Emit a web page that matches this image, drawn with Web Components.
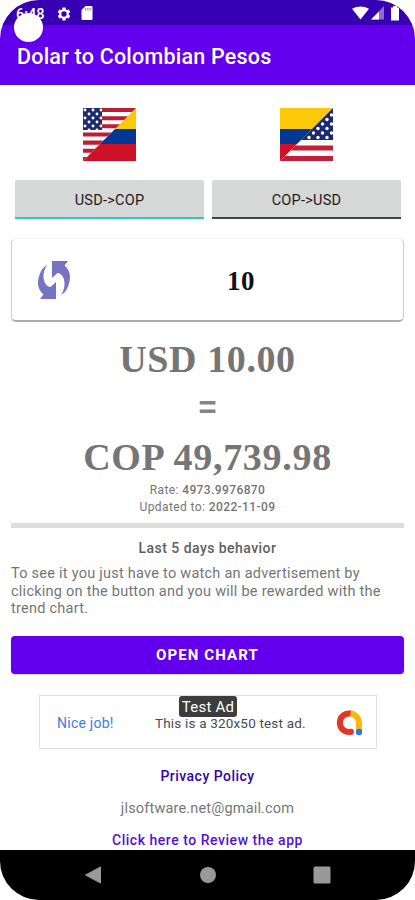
<!DOCTYPE html>
<html lang="en">
<head>
    <meta charset="utf-8">
    <title>Dolar to Colombian Pesos</title>
    <meta name="viewport" content="width=device-width, initial-scale=1">
    <style>
        body {
            margin: 0;
            background: #fff;
            font-family: Roboto, "Liberation Sans", sans-serif;
            color: #757575;
        }
    </style>
</head>

<body>
    <template id="phone-frame">
        <style>
            :host {
                display: flex;
                flex-direction: column;
                position: relative;
                width: 415px;
                height: 900px;
                overflow: hidden;
                border-radius: 39px;
                background: #fff;
            }
            .camera {
                position: absolute;
                left: 14px;
                top: 13px;
                width: 29px;
                height: 29px;
                border-radius: 50%;
                background: #fff;
            }
        </style>
        <slot></slot>
        <div class="camera"></div>
    </template>

    <template id="status-bar">
        <style>
            :host {
                display: flex;
                justify-content: space-between;
                height: 25px;
                box-sizing: border-box;
                padding: 6px 14px 0 16px;
                background: #3700b3;
                color: #fff;
                font-size: 14.5px;
                font-weight: 500;
                line-height: 17px;
            }
            div { display: flex; }
            .time { width: 40px; }
            svg { display: block; fill: #fff; }
        </style>
        <div>
            <span class="time"><slot></slot></span>
            <svg width="16" height="16" viewBox="0 0 24 24"><path d="M19.14 12.94c.04-.3.06-.61.06-.94 0-.32-.02-.64-.07-.94l2.03-1.58c.18-.14.23-.41.12-.61l-1.92-3.32c-.12-.22-.37-.29-.59-.22l-2.39.96c-.5-.38-1.03-.7-1.62-.94l-.36-2.54c-.04-.24-.24-.41-.48-.41h-3.84c-.24 0-.43.17-.47.41l-.36 2.54c-.59.24-1.13.57-1.62.94l-2.39-.96c-.22-.08-.47 0-.59.22L2.74 8.87c-.12.21-.08.47.12.61l2.03 1.58c-.05.3-.09.63-.09.94s.02.64.07.94l-2.03 1.58c-.18.14-.23.41-.12.61l1.92 3.32c.12.22.37.29.59.22l2.39-.96c.5.38 1.03.7 1.62.94l.36 2.54c.05.24.24.41.48.41h3.84c.24 0 .44-.17.47-.41l.36-2.54c.59-.24 1.13-.56 1.62-.94l2.39.96c.22.08.47 0 .59-.22l1.92-3.32c.12-.22.07-.47-.12-.61l-2.01-1.58zM12 16a4 4 0 1 1 0-8 4 4 0 0 1 0 8z"/></svg>
            <svg width="12" height="15" viewBox="0 0 12 15" style="margin-left: 9px">
                <path d="M4.5 0H10.500q1 0 1 1V13q0 1-1 1H1.500q-1 0-1-1V4z"/>
                <path d="M4.700 2v2.500M6.900 2v2.500M9.100 2v2.500" stroke="#3700b3" stroke-width=".6"/>
            </svg>
        </div>
        <div>
            <svg width="50" height="16" viewBox="0 0 50 16">
                <path d="M1 2.800Q9.500 -2 18 2.800L9.500 13.500z"/>
                <path d="M33 0V13.500H20z" fill="#8c6dd2"/>
                <path d="M28 5.500V13.500H20z"/>
                <path d="M40 1.500h2V0h4v1.500h2V14.500h-8z"/>
            </svg>
        </div>
    </template>

    <template id="app-bar">
        <style>
            :host {
                display: flex;
                align-items: center;
                height: 60px;
                box-sizing: border-box;
                padding: 4px 17px 0;
                border-bottom: 1px solid #5400d4;
                background: #6200ee;
                color: #fff;
                font-size: 21.500px;
                font-weight: 500;
                letter-spacing: .22px;
            }
        </style>
        <slot></slot>
    </template>

    <template id="flag-badge">
        <style>
            :host { display: block; width: 53px; height: 53px; }
            svg { display: none; }
            :host([from="us"]) .us, :host([from="co"]) .co { display: block; }
        </style>
        <svg class="us" width="53" height="53" viewBox="0 0 53 53">
            <defs>
                <pattern id="stars" width="8" height="8" patternUnits="userSpaceOnUse">
                    <rect width="8" height="8" fill="#1c2b70"/>
                    <circle cx="2" cy="2" r="1.450" fill="#fff"/>
                    <circle cx="6" cy="6" r="1.450" fill="#fff"/>
                </pattern>
                <clipPath id="upper"><path d="M0 0H53L0 53z"/></clipPath>
            </defs>
            <path fill="#fcc80a" d="M0 0h53v21H0z"/>
            <path fill="#003893" d="M0 21h53v15H0z"/>
            <path fill="#ce1126" d="M0 36h53v17H0z"/>
            <g clip-path="url(#upper)">
                <path fill="#fff" d="M0 0h53v53H0z"/>
                <path stroke="#b91f35" stroke-width="4.100" d="M0 2h53M0 10.200h53M0 18.300h53M0 26.500h53M0 34.600h53M0 42.800h53M0 51h53"/>
                <path fill="url(#stars)" d="M0 0h19v22H0z"/>
            </g>
        </svg>
        <svg class="co" width="53" height="53" viewBox="0 0 53 53">
            <defs>
                <pattern id="stars2" width="9" height="9" patternUnits="userSpaceOnUse">
                    <rect width="9" height="9" fill="#1c2b70"/>
                    <circle cx="2" cy="2.500" r="1.700" fill="#fff"/>
                    <circle cx="6.500" cy="7" r="1.700" fill="#fff"/>
                </pattern>
                <clipPath id="lower"><path d="M53 0V53H0z"/></clipPath>
            </defs>
            <path fill="#fcc80a" d="M0 0h53v21H0z"/>
            <path fill="#003893" d="M0 21h53v15H0z"/>
            <path fill="#ce1126" d="M0 36h53v17H0z"/>
            <g clip-path="url(#lower)">
                <path fill="#fff" d="M0 0h53v53H0z"/>
                <path fill="url(#stars2)" d="M0 0h53v32H0z"/>
                <path fill="#c41f3a" d="M0 37.500h53v5H0zM0 48h53v5H0z"/>
            </g>
        </svg>
    </template>

    <template id="toggle-button">
        <style>
            :host {
                display: flex;
                flex: 1;
                align-items: center;
                justify-content: center;
                height: 39px;
                box-sizing: border-box;
                padding-top: 4px;
                border-bottom: 2px solid #444;
                border-radius: 2px 2px 0 0;
                background: #d6d7d7;
                color: #1c1c1c;
                font-size: 14.500px;
                letter-spacing: .25px;
            }
            :host([active]) { border-bottom-color: #2cc9b7; }
        </style>
        <slot></slot>
    </template>

    <template id="amount-card">
        <style>
            :host {
                display: flex;
                align-items: center;
                height: 84px;
                box-sizing: border-box;
                margin-top: 19px;
                border: 1px solid #ccc;
                border-top-color: #f4f4f4;
                border-bottom: 2px solid #adadad;
                border-radius: 5px;
                color: #111;
            }
            svg { display: block; margin: 1px 0 0 25px; }
            .amount {
                flex: 1;
                padding: 4px 0 0 8px;
                text-align: center;
                font: bold 27px "Liberation Serif", serif;
                letter-spacing: .5px;
            }
        </style>
        <svg width="34" height="40" viewBox="0 0 34 40" fill="#7773c4">
            <path d="M15 1H31L27.500 5.500C33 10 34.500 17 31.500 25C30 30 27.500 33 24 35C28 29 28.500 22 26 17C24.500 14 22.500 13.200 20.500 13L15 18z"/>
            <path d="M19 39H3L6.500 34.500C1 30 -.5 23 2.500 15C4 10 6.500 7 10 5C6 11 5.500 18 8 23C9.500 26 11.500 26.800 13.500 27L19 22z"/>
        </svg>
        <span class="amount"><slot></slot></span>
    </template>

    <template id="conversion-result">
        <style>
            :host { display: block; text-align: center; }
            .line {
                display: block;
                height: 49px;
                font: bold 38px/49px "Liberation Serif", serif;
                white-space: nowrap;
            }
            .usd { letter-spacing: .6px; }
            .cop { letter-spacing: .7px; }
            .equals { font: bold 31px/48px "Liberation Sans", sans-serif; color: #858585; }
            .meta { display: block; font-size: 12px; line-height: 17px; letter-spacing: .4px; }
        </style>
        <span class="line usd"><slot name="from"></slot></span>
        <span class="line equals">=</span>
        <span class="line cop"><slot name="to"></slot></span>
        <span class="meta"><slot name="rate"></slot></span>
        <span class="meta"><slot name="updated"></slot></span>
    </template>

    <template id="chart-offer">
        <style>
            :host { display: block; margin-top: 7px; padding-top: 10px; border-top: 5px solid #dedede; }
            h2 {
                margin: 0;
                text-align: center;
                color: #606060;
                font-size: 14px;
                font-weight: 500;
                line-height: 20px;
                letter-spacing: .45px;
            }
            p {
                margin: 7px 0 18px;
                font-size: 14.500px;
                line-height: 17.500px;
                letter-spacing: .25px;
            }
            button {
                display: block;
                width: 100%;
                height: 38px;
                padding: 1px 0 0;
                border: 0;
                border-radius: 4px;
                background: #6200ee;
                box-shadow: 0 1px 2px #0003;
                color: #fff;
                font: 700 15px Roboto, sans-serif;
                letter-spacing: 1.100px;
            }
        </style>
        <h2><slot name="title"></slot></h2>
        <p><slot></slot></p>
        <button><slot name="action"></slot></button>
    </template>

    <template id="ad-banner">
        <style>
            :host {
                display: flex;
                position: relative;
                align-items: center;
                height: 54px;
                box-sizing: border-box;
                margin: 21px 27px 0 28px;
                padding: 2px 12px 0 17px;
                border: 1px solid #dfe3e4;
                font-size: 14px;
                letter-spacing: .25px;
            }
            .praise { width: 98px; color: #3b7de9; }
            .text { flex: 1; color: #4c4c4c; white-space: nowrap; font-size: 13.500px; letter-spacing: .18px; }
            .label {
                position: absolute;
                left: 139px;
                top: 0;
                width: 58px;
                height: 21px;
                border-radius: 3px;
                background: #3c3c3c;
                color: #fff;
                font-size: 15px;
                line-height: 23px;
                text-align: center;
            }
        </style>
        <span class="praise"><slot name="praise"></slot></span>
        <span class="text"><slot></slot></span>
        <svg width="28" height="28" viewBox="0 0 28 28" fill="none" stroke-width="6">
            <path stroke="#fbb90b" d="M13 4.500A9.500 9.500 0 0 1 23 14V23"/>
            <path stroke="#e33527" d="M14.500 4.500A9.300 9.300 0 1 0 15.500 22.700"/>
            <circle cx="15" cy="22.800" r="3" fill="#e33527" stroke="none"/>
            <circle cx="23" cy="23" r="3.200" fill="#2878e5" stroke="none"/>
        </svg>
        <span class="label"><slot name="label"></slot></span>
    </template>

    <template id="footer-link">
        <style>
            :host {
                display: block;
                text-align: center;
                font-size: 14px;
                line-height: 20px;
                letter-spacing: .47px;
                font-weight: 500;
                color: #3303ad;
            }
            :host([plain]) { font-weight: 400; color: #777; font-size: 14.500px; letter-spacing: .17px; }
            :host([accent]) { color: #5310dc; letter-spacing: .53px; }
        </style>
        <slot></slot>
    </template>

    <template id="nav-bar">
        <style>
            :host {
                display: grid;
                grid-template-columns: repeat(3, 114px);
                place-content: center;
                place-items: center;
                height: 50px;
                box-sizing: border-box;
                margin-top: auto;
                background: #000;
            }
            svg { display: block; fill: #999; }
        </style>
        <svg width="18" height="18"><path d="M15.500 1V17L.5 9z" stroke="#999" stroke-linejoin="round"/></svg>
        <svg width="18" height="18"><circle cx="9" cy="9" r="8"/></svg>
        <svg width="18" height="18"><rect x=".5" y=".5" width="17" height="17" rx="1.500"/></svg>
    </template>

    <template id="page-content">
        <style>
            :host { display: block; padding: 23px 11px 0; }
        </style>
        <slot></slot>
    </template>

    <template id="button-row">
        <style>
            :host { display: flex; }
            :host([flags]) { justify-content: space-between; padding: 0 71px 0 72px; }
            :host([toggles]) { gap: 8px; margin-top: 19px; padding: 0 3px 0 4px; }
        </style>
        <slot></slot>
    </template>

    <phone-frame>
        <status-bar>6:48</status-bar>
        <app-bar>Dolar to Colombian Pesos</app-bar>
        <page-content>
            <button-row flags>
                <flag-badge from="us"></flag-badge>
                <flag-badge from="co"></flag-badge>
            </button-row>
            <button-row toggles>
                <toggle-button active>USD-&gt;COP</toggle-button>
                <toggle-button>COP-&gt;USD</toggle-button>
            </button-row>
            <amount-card>10</amount-card>
            <conversion-result style="margin-top: 13px">
                <span slot="from">USD 10.00</span>
                <span slot="to">COP 49,739.98</span>
                <span slot="rate">Rate: <b style="font-weight: 500">4973.9976870</b></span>
                <span slot="updated">Updated to: <b style="font-weight: 500">2022-11-09</b></span>
            </conversion-result>
            <chart-offer>
                <span slot="title">Last 5 days behavior</span>
                To see it you just have to watch an advertisement by<br>clicking on the button and you will be rewarded with the<br>trend chart.
                <span slot="action">OPEN CHART</span>
            </chart-offer>
            <ad-banner>
                <span slot="praise">Nice job!</span>
                This is a 320x50 test ad.
                <span slot="label">Test Ad</span>
            </ad-banner>
            <footer-link style="margin-top: 17px">Privacy Policy</footer-link>
            <footer-link plain style="margin-top: 13px">jlsoftware.net@gmail.com</footer-link>
            <footer-link accent style="margin-top: 11px">Click here to Review the app</footer-link>
        </page-content>
        <nav-bar></nav-bar>
    </phone-frame>

    <script>
        class TemplateElement extends HTMLElement {
            constructor() {
                super();
                const template = document.querySelector(`template#${this.localName}`);
                this.attachShadow({ mode: 'open' });
                this.shadowRoot.appendChild(
                    template.content.cloneNode(true)
                );
            }
        }

        // every template is the markup of the element named by its id
        document.querySelectorAll('template').forEach(template => {
            customElements.define(template.id, class extends TemplateElement {});
        });
    </script>
</body>
</html>
